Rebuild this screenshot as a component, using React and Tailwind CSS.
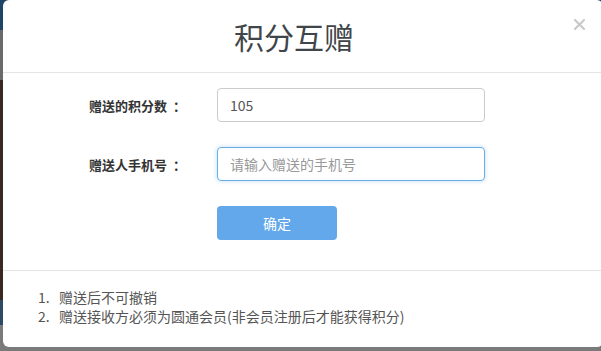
import React from 'react';

const font = "font-['Noto_Sans_CJK_SC','Noto_Sans',sans-serif]";

const CloseIcon = () => (
  <svg width="11" height="11" viewBox="0 0 11 11" fill="none">
    <path d="M1 1L10 10M10 1L1 10" stroke="#c8c8c8" strokeWidth="2" strokeLinecap="square" />
  </svg>
);

const FormRow = ({ label, children }) => (
  <div className="flex items-center">
    <label className="w-[128px] text-[13px] font-bold text-[#333] leading-none">
      {label}
      <span className="ml-[6px]">：</span>
    </label>
    {children}
  </div>
);

const PointsGiftModal = () => {
  const notes = [
    '赠送后不可撤销',
    '赠送接收方必须为圆通会员(非会员注册后才能获得积分)',
  ];

  return (
    <div className="ml-[3px] w-[600px] h-[347px] bg-white rounded-[6px] flex flex-col">
      {/* header */}
      <div className="relative h-[73px] border-b border-[#e5e5e5] flex justify-center pr-[18px] pt-[21px]">
        <h1 className="text-[30px] leading-none font-normal text-[#3f4549]">积分互赠</h1>
        <button className="absolute left-[570px] top-[18px] p-[1px]">
          <CloseIcon />
        </button>
      </div>

      {/* form */}
      <div className="flex flex-col gap-[25px] pt-[15px] pb-[30px] pl-[86px] border-b border-[#e5e5e5]">
        <FormRow label="赠送的积分数">
          <input
            defaultValue="105"
            className={`w-[268px] h-[34px] px-[12px] border border-[#ccc] rounded-[4px] text-[14px] text-[#555] outline-none ${font}`}
          />
        </FormRow>
        <FormRow label="赠送人手机号">
          <input
            placeholder="请输入赠送的手机号"
            className={`w-[268px] h-[34px] px-[12px] border border-[#66afe9] rounded-[4px] text-[14px] text-[#555] placeholder:text-[#999] outline-none shadow-[0_0_4px_rgba(102,175,233,0.45)] ${font}`}
          />
        </FormRow>
        <div className="pl-[128px]">
          <button className="w-[120px] h-[34px] rounded-[4px] bg-[#63a8ea] text-white text-[14px]">确定</button>
        </div>
      </div>

      {/* notes */}
      <ol className="pt-[17px] pl-[35px] text-[14px] leading-[19px] text-[#555]">
        {notes.map((note, i) => (
          <li key={i} className="flex">
            <span className="w-[21px]">{i + 1}.</span>
            <span>{note}</span>
          </li>
        ))}
      </ol>
    </div>
  );
};

export default function App() {
  return (
    <div
      className={`w-[601px] h-[351px] overflow-hidden ${font} bg-[linear-gradient(to_bottom,#1e4468_0px,#1e4468_30px,#6a6a6a_30px,#6a6a6a_80px,#3a2823_80px,#3a2823_300px,#2f4a66_300px,#2f4a66_325px,#7a7a7a_325px)]`}
    >
      <PointsGiftModal />
    </div>
  );
}
